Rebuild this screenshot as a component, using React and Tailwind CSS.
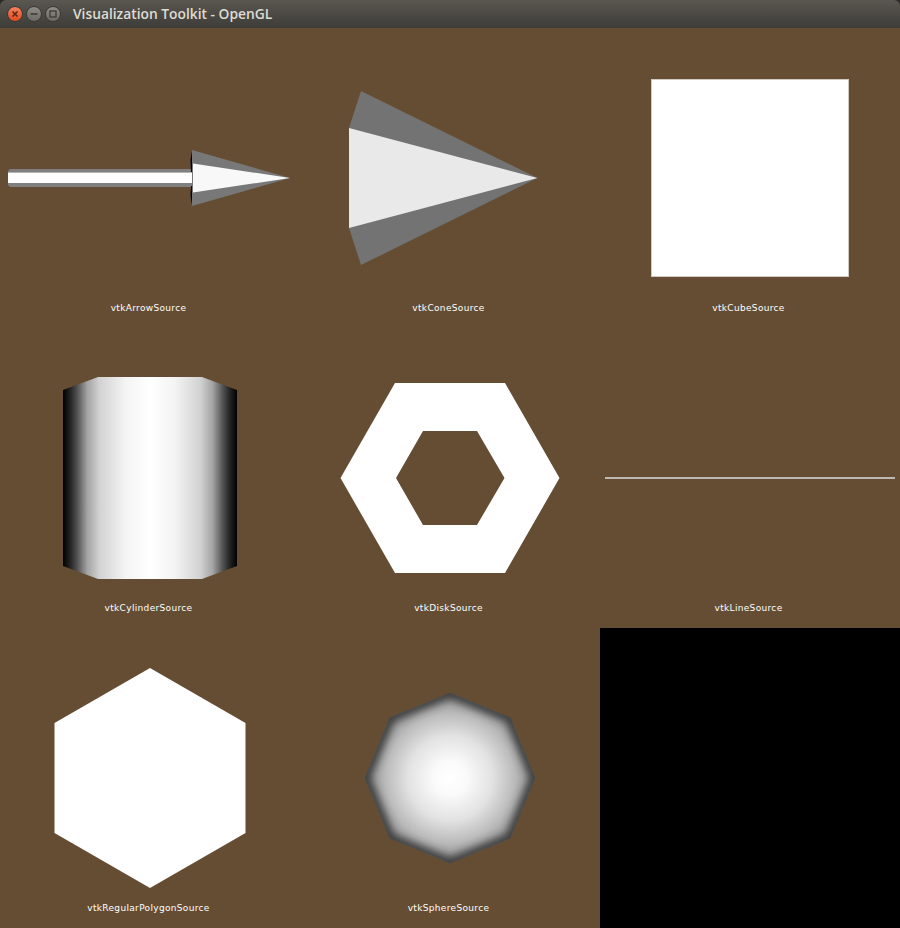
import React from "react";

function Cell({ label, viewBox, children }) {
  return (
    <div className="flex h-[300px] w-[300px] flex-col bg-[#654d33]">
      <svg width="300" height="272" viewBox={viewBox} className="block shrink-0">
        {children}
      </svg>
      <div className="flex h-[17px] items-center justify-center pr-[3px] font-['DejaVu_Sans',sans-serif] text-[9px] leading-none tracking-[0.33px] text-[#ffffff]">
        {label}
      </div>
    </div>
  );
}

function WinButton({ children, className }) {
  return (
    <div className={`flex h-[16px] w-[16px] items-center justify-center rounded-full border border-[#3a3935] ${className}`}>
      {children}
    </div>
  );
}

const OCT = "450,692.5 510.5,717.5 535.5,778 510.5,838.5 450,863.5 389.5,838.5 364.5,778 389.5,717.5";

export default function App() {
  return (
    <div className="h-[928px] w-[900px] overflow-hidden bg-[#2b2a27]">
      <div className="flex h-[28px] items-center rounded-t-[6px] bg-gradient-to-b from-[#5a5751] to-[#3d3c38] pl-[7px]">
        <div className="flex items-center gap-[3px]">
          <WinButton className="bg-gradient-to-b from-[#f5805a] to-[#dc4a1e]">
            <svg width="8" height="8" viewBox="0 0 8 8"><path d="M1.5 1.5 L6.5 6.5 M6.5 1.5 L1.5 6.5" stroke="#5c2410" strokeWidth="1.5" /></svg>
          </WinButton>
          <WinButton className="bg-gradient-to-b from-[#8f8c85] to-[#6c6a64]">
            <svg width="8" height="8" viewBox="0 0 8 8"><path d="M0.5 4 H7.5" stroke="#3c3b37" strokeWidth="1.6" /></svg>
          </WinButton>
          <WinButton className="bg-gradient-to-b from-[#8f8c85] to-[#6c6a64]">
            <svg width="8" height="8" viewBox="0 0 8 8"><rect x="1" y="1" width="6" height="6" fill="none" stroke="#3c3b37" strokeWidth="1.3" /></svg>
          </WinButton>
        </div>
        <span className="ml-[12px] font-['Open_Sans',sans-serif] text-[13.8px] font-semibold leading-none text-[#dfdbd2]">
          Visualization Toolkit - OpenGL
        </span>
      </div>

      <div className="grid grid-cols-[300px_300px_300px]">
        <Cell label="vtkArrowSource" viewBox="0 28 300 272">
          <defs>
            <linearGradient id="shaft" x1="0" y1="169" x2="0" y2="187" gradientUnits="userSpaceOnUse">
              <stop offset="0" stopColor="#808080" />
              <stop offset="0.19" stopColor="#808080" />
              <stop offset="0.19" stopColor="#b4b4b4" />
              <stop offset="0.24" stopColor="#b4b4b4" />
              <stop offset="0.24" stopColor="#ffffff" />
              <stop offset="0.76" stopColor="#ffffff" />
              <stop offset="0.76" stopColor="#808080" />
              <stop offset="1" stopColor="#808080" />
            </linearGradient>
          </defs>
          <polygon points="8,171 10,169 193,169 193,187 10,187 8,185" fill="url(#shaft)" />
          <polygon points="192,151 190.5,160 191,172 193,172 193,151" fill="#000" />
          <polygon points="192,205 190.5,196 191,186 193,186 193,205" fill="#000" />
          <polygon points="192,150 290,178 192,206" fill="#787878" />
          <polygon points="193,163.5 290,178 193,192.5" fill="#f8f8f8" />
        </Cell>

        <Cell label="vtkConeSource" viewBox="300 28 300 272">
          <polygon points="537.5,178 361,91 349,128 349,228 361,265" fill="#737373" />
          <polygon points="537.5,178 349,128 349,228" fill="#e9e9e9" />
        </Cell>

        <Cell label="vtkCubeSource" viewBox="600 28 300 272">
          <rect x="651.5" y="79.5" width="197" height="197" fill="#ffffff" stroke="#cfcac4" strokeWidth="1" />
        </Cell>

        <Cell label="vtkCylinderSource" viewBox="0 328 300 272">
          <defs>
            <linearGradient id="cyl" x1="63" y1="0" x2="237" y2="0" gradientUnits="userSpaceOnUse">
              <stop offset="0" stopColor="#000000" />
              <stop offset="0.04" stopColor="#222222" />
              <stop offset="0.08" stopColor="#505050" />
              <stop offset="0.14" stopColor="#a4a4a4" />
              <stop offset="0.21" stopColor="#d2d2d2" />
              <stop offset="0.36" stopColor="#f4f4f4" />
              <stop offset="0.5" stopColor="#ffffff" />
              <stop offset="0.64" stopColor="#f4f4f4" />
              <stop offset="0.79" stopColor="#d2d2d2" />
              <stop offset="0.86" stopColor="#a4a4a4" />
              <stop offset="0.92" stopColor="#505050" />
              <stop offset="0.96" stopColor="#222222" />
              <stop offset="1" stopColor="#000000" />
            </linearGradient>
          </defs>
          <polygon points="63,390 98,377 202,377 237,390 237,566 202,579 98,579 63,566" fill="url(#cyl)" />
        </Cell>

        <Cell label="vtkDiskSource" viewBox="300 328 300 272">
          <path
            fillRule="evenodd"
            fill="#ffffff"
            d="M340.5 478 L395 383 H505 L559.5 478 L505 573 H395 Z M396 478 L423 431 H477 L504.5 478 L477 525 H423 Z"
          />
        </Cell>

        <Cell label="vtkLineSource" viewBox="600 328 300 272">
          <rect x="605" y="477" width="290" height="2" fill="#bdb9b3" />
        </Cell>

        <Cell label="vtkRegularPolygonSource" viewBox="0 628 300 272">
          <polygon points="150,668 245.5,723 245.5,833 150,888 54.5,833 54.5,723" fill="#ffffff" />
        </Cell>

        <Cell label="vtkSphereSource" viewBox="300 628 300 272">
          <defs>
            <radialGradient id="sph" cx="450" cy="778" r="85" gradientUnits="userSpaceOnUse">
              <stop offset="0" stopColor="#ffffff" />
              <stop offset="0.2" stopColor="#fafafa" />
              <stop offset="0.5" stopColor="#e2e2e2" />
              <stop offset="0.75" stopColor="#bcbcbc" />
              <stop offset="1" stopColor="#8c8c8c" />
            </radialGradient>
            <clipPath id="oct">
              <polygon points={OCT} />
            </clipPath>
            <filter id="edge" filterUnits="userSpaceOnUse" x="340" y="668" width="220" height="220">
              <feGaussianBlur stdDeviation="4" />
            </filter>
          </defs>
          <g clipPath="url(#oct)">
            <polygon points={OCT} fill="url(#sph)" />
            <polygon points={OCT} fill="none" stroke="#383838" strokeWidth="11" filter="url(#edge)" />
          </g>
        </Cell>

        <div className="h-[300px] w-[300px] bg-black" />
      </div>
    </div>
  );
}
